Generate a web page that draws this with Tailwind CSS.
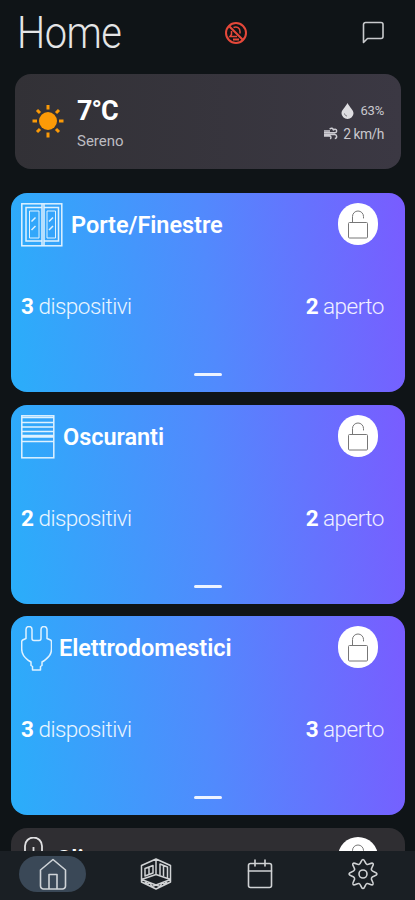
<!DOCTYPE html>
<html lang="it">
<head>
    <meta charset="UTF-8" />
    <meta name="viewport" content="width=device-width, initial-scale=1.0"/>
    <title>Home</title>
    <script src="https://cdn.jsdelivr.net/npm/@tailwindcss/browser@4"></script>
</head>
<body class="bg-[#0f1417] font-['Roboto',sans-serif] text-white">

<!-- shared symbols -->
<svg class="hidden">
    <symbol id="lock" viewBox="0 0 40 40">
        <rect x="10.5" y="18.5" width="19" height="15.5" rx="1" fill="none" stroke="#777" stroke-width="1"/>
        <path d="M14.5 18.5V12.500a5.500 5.500 0 0 1 11 0v1.500" fill="none" stroke="#777" stroke-width="1" stroke-linecap="round"/>
    </symbol>
</svg>

<div class="w-[415px] h-[900px] overflow-hidden flex flex-col">
    <main class="h-[851px] shrink-0 overflow-hidden">

        <!-- header -->
        <header class="h-[74px] flex items-center pl-[17px] pr-[30px] pb-[9px]">
            <h1 class="w-[207px] pt-[3px] text-[43.5px] leading-none font-light tracking-[-0.6px] text-[#e4e5e6] origin-left scale-x-[0.915]">Home</h1>
            <svg class="w-6 h-6" viewBox="0 0 24 24" fill="none" stroke="#e5483a" stroke-width="2">
                <circle cx="12" cy="12" r="10"/>
                <path d="M5.2 5.2l13.6 13.6"/>
                <path d="M9.500 6.500c3.500-1.300 6.500.5 6.500 4v2M7.500 10v3.500l-1.500 2h7" stroke-width="1.500"/>
                <path d="M9 18.500h6" stroke-width="2"/>
            </svg>
            <svg class="w-6 h-6 ml-auto" viewBox="0 0 24 24" fill="none" stroke="#c9cbcd" stroke-width="1.600" stroke-linejoin="round">
                <path d="M2.500 21.500V3.500a2 2 0 0 1 2-2h15.500a2 2 0 0 1 2 2v12a2 2 0 0 1-2 2H6.500z"/>
            </svg>
        </header>

        <!-- weather -->
        <section class="mx-[14px] ml-[15px] h-[95px] rounded-[16px] bg-linear-to-r from-[#323136] to-[#3b3843] flex items-center pl-[17px] pr-[17px]">
            <svg class="w-8 h-[34px]" viewBox="0 0 32 34" fill="none" stroke="#fb9a07" stroke-width="3">
                <circle cx="16" cy="16" r="9" fill="#fb9a07" stroke="none"/>
                <path d="M16 -.5v5M16 27.500v5M.5 16h4.500M27 16h4.500M5 5l3 3M24 24l3 3M27 5l-3 3M8 24l-3 3"/>
            </svg>
            <div class="ml-[13px] pt-px">
                <p class="pt-px text-[27px] leading-[32px] font-bold tracking-[-1px]">7°C</p>
                <p class="mt-[5px] text-[15px] leading-[18px] text-[#bdbcc1]">Sereno</p>
            </div>
            <div class="ml-auto pt-px text-[#c9c8ce] leading-[16px]">
                <p class="flex items-center justify-end gap-[6px] text-[13px] tracking-[-0.2px]">
                    <svg class="w-[13px] h-4" viewBox="0 0 13 16"><path d="M6.500 0C8.500 4 12.500 7 12.500 10.300a6 5.600 0 0 1-12 0C.5 7 4.500 4 6.500 0z" fill="#dedde1"/><path d="M3.500 10.500c.2 1.500 1.200 2.300 2.500 2.500" stroke="#77757d" fill="none"/></svg>
                    63%
                </p>
                <p class="mt-[7px] flex items-center justify-end gap-[5px] text-[13.800px] tracking-[-0.45px]">
                    <svg class="w-[14px] h-[14px]" viewBox="0 0 14 14" fill="none" stroke="#cdccd2" stroke-width="1.500">
                        <path d="M0 4h6M0 5.700h11a1.700 1.700 0 1 0-1.700-2M0 7.500h10.500a2 2 0 0 1 .3 4M5.800 2.300C6.500.5 9.500 1 9 3M0 9h5.500c1.500 0 2 1.500.8 3"/>
                    </svg>
                    2 km/h
                </p>
            </div>
        </section>

        <!-- device groups -->
        <div class="mt-[24px] ml-[11px] w-[394px] flex flex-col gap-[12.500px]">

            <section class="relative h-[199px] shrink-0 rounded-[16px] bg-linear-[84deg,#2aaefa,#518afd_50%,#795cff] pl-[10px] pr-[21px]">
                <div class="pt-[10px] flex items-start">
                    <svg class="w-[42px] h-[44px]" viewBox="0 0 42 44" fill="none" stroke="#dff2ff" stroke-width="1.500">
                        <rect x=".8" y=".8" width="40" height="42"/>
                        <path d="M5 4.500h16v33.500H5zM23 4.500h14.500v33.500H23zM21 1v42M23 1v42"/>
                        <path d="M8.500 8h9.500v27H8.500zM26 8h8.500v27H26z" stroke-width="1"/>
                        <path d="M10.500 18.500l4-4M10.500 27l4-4M28 18.500l4-4M28 27l4-4"/>
                    </svg>
                    <h2 class="ml-[8px] mt-[8px] text-[23.500px] leading-[28px] font-semibold tracking-[-0.05px]">Porte/Finestre</h2>
                    <span class="ml-auto mr-[6px] w-10 h-[42px] rounded-full bg-white flex items-center justify-center"><svg class="w-10 h-10"><use href="#lock"/></svg></span>
                </div>
                <div class="mt-[45px] flex justify-between text-[22.500px] leading-[28px] font-light tracking-[-0.5px] text-white/90">
                    <p><b class="font-bold text-white">3</b> dispositivi</p>
                    <p><b class="font-bold text-white">2</b> aperto</p>
                </div>
                <div class="absolute left-[183px] bottom-[16px] w-[28px] h-[3px] rounded-full bg-white/90"></div>
            </section>

            <section class="relative h-[199px] shrink-0 rounded-[16px] bg-linear-[84deg,#2aaefa,#518afd_50%,#795cff] pl-[10px] pr-[21px]">
                <div class="pt-[10px] flex items-start">
                    <svg class="w-[34px] h-[44px]" viewBox="0 0 34 44" fill="none" stroke="#dff2ff" stroke-width="1.500">
                        <rect x=".8" y=".8" width="32" height="42"/>
                        <path d="M1 2.500h32M1 7.500h32M1 12h32M1 16.500h32M1 20.500h32M1 22h32M1 26.500h32" stroke-width="1.700"/>
                    </svg>
                    <h2 class="ml-[8px] mt-[8px] text-[23.500px] leading-[28px] font-semibold tracking-[-0.05px]">Oscuranti</h2>
                    <span class="ml-auto mr-[6px] w-10 h-[42px] rounded-full bg-white flex items-center justify-center"><svg class="w-10 h-10"><use href="#lock"/></svg></span>
                </div>
                <div class="mt-[45px] flex justify-between text-[22.500px] leading-[28px] font-light tracking-[-0.5px] text-white/90">
                    <p><b class="font-bold text-white">2</b> dispositivi</p>
                    <p><b class="font-bold text-white">2</b> aperto</p>
                </div>
                <div class="absolute left-[183px] bottom-[16px] w-[28px] h-[3px] rounded-full bg-white/90"></div>
            </section>

            <section class="relative h-[199px] shrink-0 rounded-[16px] bg-linear-[84deg,#2aaefa,#518afd_50%,#795cff] pl-[10px] pr-[21px]">
                <div class="pt-[10px] flex items-start">
                    <svg class="w-[31px] h-[45px]" viewBox="0 0 31 45" fill="none" stroke="#dff2ff" stroke-width="1.500" stroke-linejoin="round">
                        <path d="M5 12.500V3.500a2.800 2.800 0 0 1 6 0V12.500q0 2 2 2h5q2 0 2-2V3.500a2.800 2.800 0 0 1 6 0V12.500l3.500 1.500q1 .5 1 2v7c0 6-3.500 8.500-7 11.500l-2.500 1.500v3.500l-1.500 1v3.500H11.500v-3.500l-1.500-1v-3.500L7.500 34.500C4 31.500.7 29 .7 23v-7q0-1.500 1-2z"/>
                    </svg>
                    <h2 class="ml-[7px] mt-[8px] text-[23.500px] leading-[28px] font-semibold tracking-[-0.05px]">Elettrodomestici</h2>
                    <span class="ml-auto mr-[6px] w-10 h-[42px] rounded-full bg-white flex items-center justify-center"><svg class="w-10 h-10"><use href="#lock"/></svg></span>
                </div>
                <div class="mt-[44px] flex justify-between text-[22.500px] leading-[28px] font-light tracking-[-0.5px] text-white/90">
                    <p><b class="font-bold text-white">3</b> dispositivi</p>
                    <p><b class="font-bold text-white">3</b> aperto</p>
                </div>
                <div class="absolute left-[183px] bottom-[16px] w-[28px] h-[3px] rounded-full bg-white/90"></div>
            </section>

            <section class="h-[199px] shrink-0 rounded-[16px] bg-[#2f2e32] pl-[13px] pr-[21px]">
                <div class="pt-[9px] flex items-start">
                    <svg class="w-[20px] h-[44px]" viewBox="0 0 20 44" fill="none" stroke="#e0e0e2" stroke-width="1.800">
                        <path d="M1 30V9a8.500 8.500 0 0 1 17 0v21a9 9 0 1 1-17 0zM9.500 10v24"/>
                    </svg>
                    <h2 class="ml-[12px] mt-[8px] text-[23.500px] leading-[28px] font-semibold">Clima</h2>
                    <span class="ml-auto mr-[6px] w-10 h-[42px] rounded-full bg-white flex items-center justify-center"><svg class="w-10 h-10"><use href="#lock"/></svg></span>
                </div>
            </section>
        </div>
    </main>

    <!-- bottom nav -->
    <nav class="h-[49px] shrink-0 bg-[#1a1f24] flex items-start justify-between pl-[19px] pr-[18px] pt-[5px]">
        <a class="w-[67px] h-[36px] rounded-full bg-[#3a4857] flex items-center justify-center">
            <svg class="w-[28px] h-[32px]" viewBox="0 0 28 32" fill="none" stroke="#d0d4d8" stroke-width="1.600" stroke-linejoin="round">
                <path d="M1.500 12L14 1.500 26.500 12v16a3 3 0 0 1-3 3h-19a3 3 0 0 1-3-3zM10 31V16.500h8V31"/>
            </svg>
        </a>
        <a class="w-[67px] h-[36px] flex items-center justify-center">
            <svg class="w-[32px] h-[32px]" viewBox="0 0 32 32" fill="none" stroke="#d0d2d4" stroke-width="1.500" stroke-linejoin="round">
                <path d="M16 1l14.500 6.500V24L16 31 1.500 24V7.500zM16 1v15.500M1.500 21.500L16 16.500l14.500 5L16 27zM5 23.500l2 2.500 3-1 2 3.500 4-1.500 4 1.500 2-3.500 3 1 2-2.500"/>
                <path d="M5 10.500l8-3v7.500l-8 3zM9 9v7.500M20 17.500V6l7.500 3v11M23.500 8v10.500"/>
            </svg>
        </a>
        <a class="w-[67px] h-[36px] flex items-center justify-center">
            <svg class="w-[26px] h-[30px]" viewBox="0 0 26 30" fill="none" stroke="#d0d2d4" stroke-width="1.600" stroke-linecap="round">
                <rect x="1.500" y="4.500" width="23" height="24" rx="2"/>
                <path d="M1.500 12h23M8 1v6M18 1v6"/>
            </svg>
        </a>
        <a class="w-[67px] h-[36px] flex items-center justify-center">
            <svg class="w-[30px] h-[32px]" viewBox="0 0 30 32" fill="none" stroke="#d0d2d4" stroke-width="1.600" stroke-linejoin="round">
                <path d="M15 1.500C17 1.500 17 6 19 6.500S23.500 4 25 5.500 22.500 10 23.500 12 29 14 29 16s-4.500 2-5.500 4 3 5 1.500 6.500-4-1.500-6-1S17 30.500 15 30.500 13 26 11 25.500 6.500 28 5 26.500 7.500 22 6.500 20 1 18 1 16s4.500-2 5.500-4-3-5-1.500-6.500S9 7 11 6.500 13 1.500 15 1.500z"/>
                <circle cx="15" cy="16" r="4"/>
            </svg>
        </a>
    </nav>
</div>

</body>
</html>
